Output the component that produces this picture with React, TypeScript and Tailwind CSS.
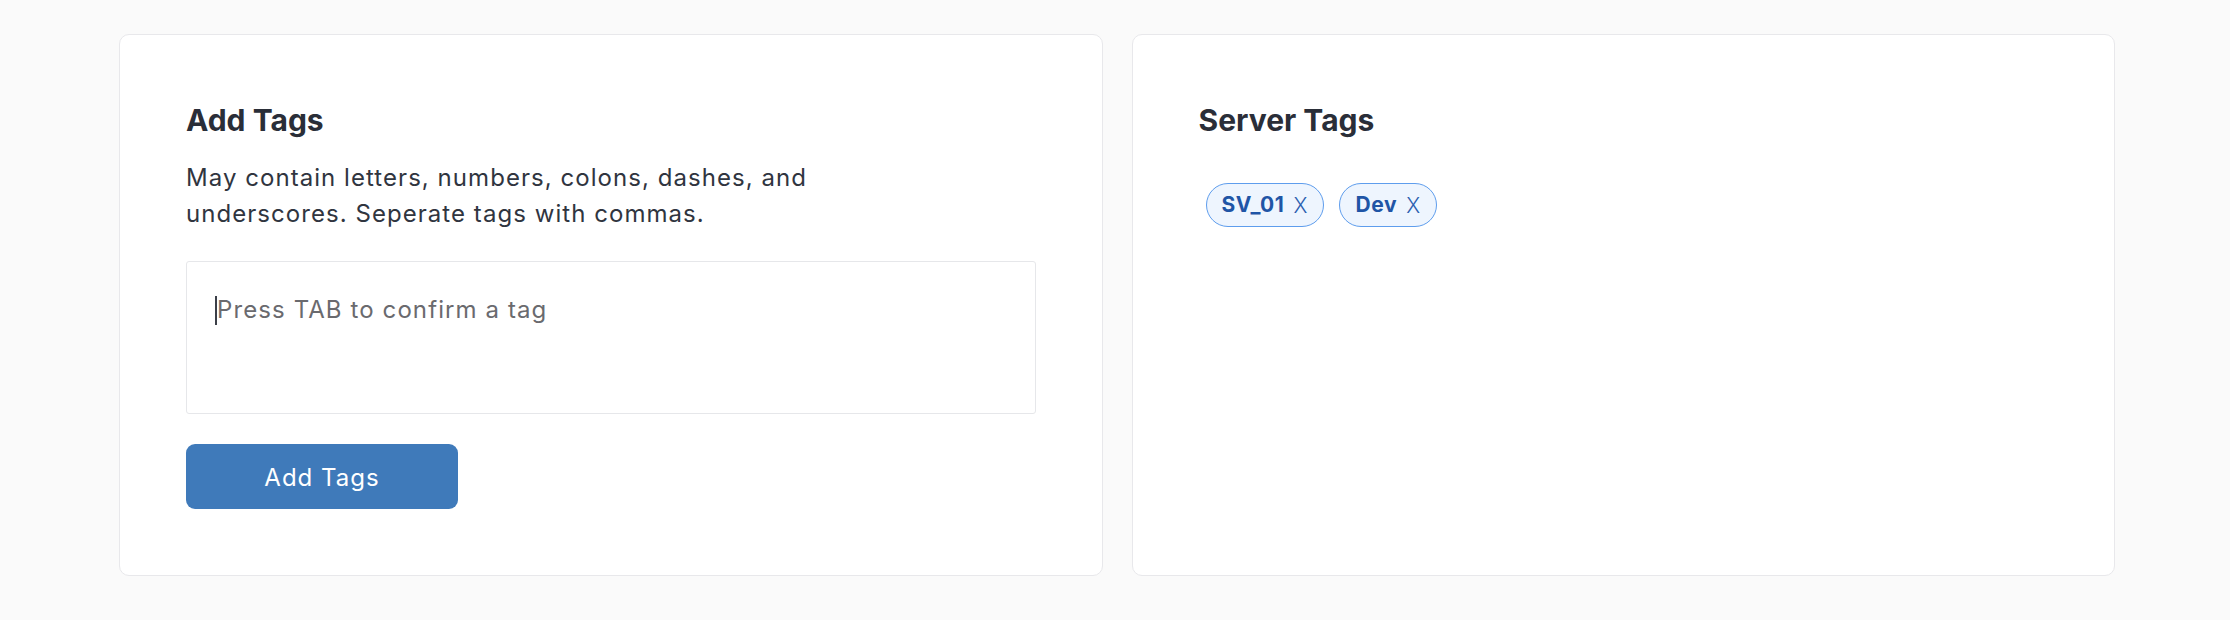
import { useState } from 'react'

const FONT = "font-['Inter','Noto_Sans',sans-serif]"

function TagChip({ label, onRemove }: { label: string; onRemove: () => void }) {
  return (
    <span className="inline-flex h-[44px] items-center rounded-full border-[1.5px] border-[#5e9ded] bg-[#eef5fe] pl-[15px] pr-[16px] text-[21px] text-[#1f55a6]">
      <span className="font-bold tracking-[0.6px]">{label}</span>
      <button onClick={onRemove} className="ml-[9px] font-light leading-none text-[#2b5fb0]">
        X
      </button>
    </span>
  )
}

export default function App() {
  const [tags, setTags] = useState<string[]>(['SV_01', 'Dev'])
  const [draft, setDraft] = useState('')

  function addTags() {
    const next = draft
      .split(',')
      .map(t => t.trim())
      .filter(t => /^[A-Za-z0-9:_-]+$/.test(t))
    if (next.length === 0) return
    setTags(prev => [...prev, ...next.filter(t => !prev.includes(t))])
    setDraft('')
  }

  return (
    <div className={`min-h-screen bg-[#fafafa] pl-[119px] pr-[115px] pt-[34px] pb-[44px] ${FONT}`}>
      <div className="grid grid-cols-2 gap-[29px]">
        {/* Add tags */}
        <section className="rounded-[10px] border border-[#e8e8eb] bg-white px-[66px] pt-[67px] pb-[66px]">
          <h2 className="text-[30px] leading-[36px] font-bold text-[#2a2e38]">Add Tags</h2>
          <p className="mt-[22px] max-w-[690px] text-[24px] leading-[36px] tracking-[1.05px] text-[#30353f]">
            May contain letters, numbers, colons, dashes, and underscores. Seperate tags with commas.
          </p>
          <div className="relative mt-[29px]">
            <textarea
              value={draft}
              onChange={e => setDraft(e.target.value)}
              placeholder="Press TAB to confirm a tag"
              className="block h-[153px] w-full resize-none rounded-[3px] border border-[#e6e7ea] px-[30px] pt-[30px] text-[24px] leading-[36px] tracking-[1.1px] text-[#333] outline-none placeholder:text-[#6a6a6e]"
            />
            {draft === '' && (
              <span className="pointer-events-none absolute left-[29px] top-[35px] h-[29px] w-[1.5px] bg-[#3b3f48]" />
            )}
          </div>
          <button
            onClick={addTags}
            className="mt-[30px] h-[65px] w-[272px] rounded-[9px] bg-[#3f7aba] pt-[2px] text-[24px] tracking-[1px] text-white"
          >
            Add Tags
          </button>
        </section>

        {/* Server tags */}
        <section className="rounded-[10px] border border-[#e8e8eb] bg-white px-[66px] pt-[67px] pb-[66px]">
          <h2 className="text-[30px] leading-[36px] font-bold text-[#2a2e38]">Server Tags</h2>
          <div className="mt-[45px] flex flex-wrap gap-[15px] pl-[7px]">
            {tags.map(tag => (
              <TagChip key={tag} label={tag} onRemove={() => setTags(prev => prev.filter(t => t !== tag))} />
            ))}
          </div>
        </section>
      </div>
    </div>
  )
}
